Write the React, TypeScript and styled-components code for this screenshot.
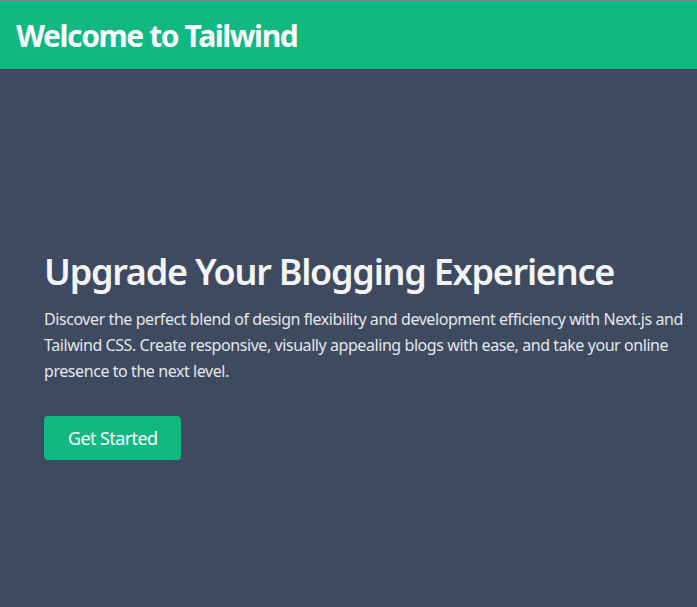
import styled, { createGlobalStyle } from 'styled-components'

const GlobalStyle = createGlobalStyle`
    html, body {
        margin: 0;
        padding: 0;
        background-color: #3e4a5f;
        font-family: "Segoe UI", "Noto Sans", "Open Sans", sans-serif;
    }
    * {
        box-sizing: border-box;
    }
`

const Pagina = styled.div`
    min-height: 607px;
    display: flex;
    flex-direction: column;
    background-color: #3e4a5f;
    border-top: 1px solid #7b8a8c;
`

const Cabecera = styled.header`
    background-color: #10b981;
    padding: 17px 16px 15px;
`

const TituloCabecera = styled.h1`
    margin: 0;
    color: #ffffff;
    font-size: 30px;
    line-height: 36px;
    font-weight: 700;
    letter-spacing: -1.4px;
`

const Hero = styled.main`
    flex: 1;
    display: flex;
    flex-direction: column;
    justify-content: center;
    padding: 36px 8px 0 44px;
`

const TituloHero = styled.h2`
    margin: 0 0 14px;
    color: #f3f4f6;
    font-size: 36px;
    line-height: 40px;
    font-weight: 600;
    letter-spacing: -1.25px;
`

const Parrafo = styled.p`
    margin: 0 0 32px;
    color: #e5e7eb;
    font-size: 16px;
    line-height: 26px;
    max-width: 645px;
    letter-spacing: -0.43px;
`

const Boton = styled.button`
    align-self: flex-start;
    background-color: #10b981;
    color: #ffffff;
    border: none;
    border-radius: 4px;
    padding: 8px 24px;
    height: 44px;
    font-family: inherit;
    font-size: 18px;
    line-height: 28px;
    letter-spacing: -0.6px;
    cursor: pointer;
    &:hover {
        background-color: #059669;
    }
`

function App() {
    return (
        <>
            <GlobalStyle />
            <Pagina>
                <Cabecera>
                    <TituloCabecera>Welcome to Tailwind</TituloCabecera>
                </Cabecera>
                <Hero>
                    <TituloHero>Upgrade Your Blogging Experience</TituloHero>
                    <Parrafo>
                        Discover the perfect blend of design flexibility and development efficiency with Next.js and
                        Tailwind CSS. Create responsive, visually appealing blogs with ease, and take your online
                        presence to the next level.
                    </Parrafo>
                    <Boton>Get Started</Boton>
                </Hero>
            </Pagina>
        </>
    )
}

export default App
